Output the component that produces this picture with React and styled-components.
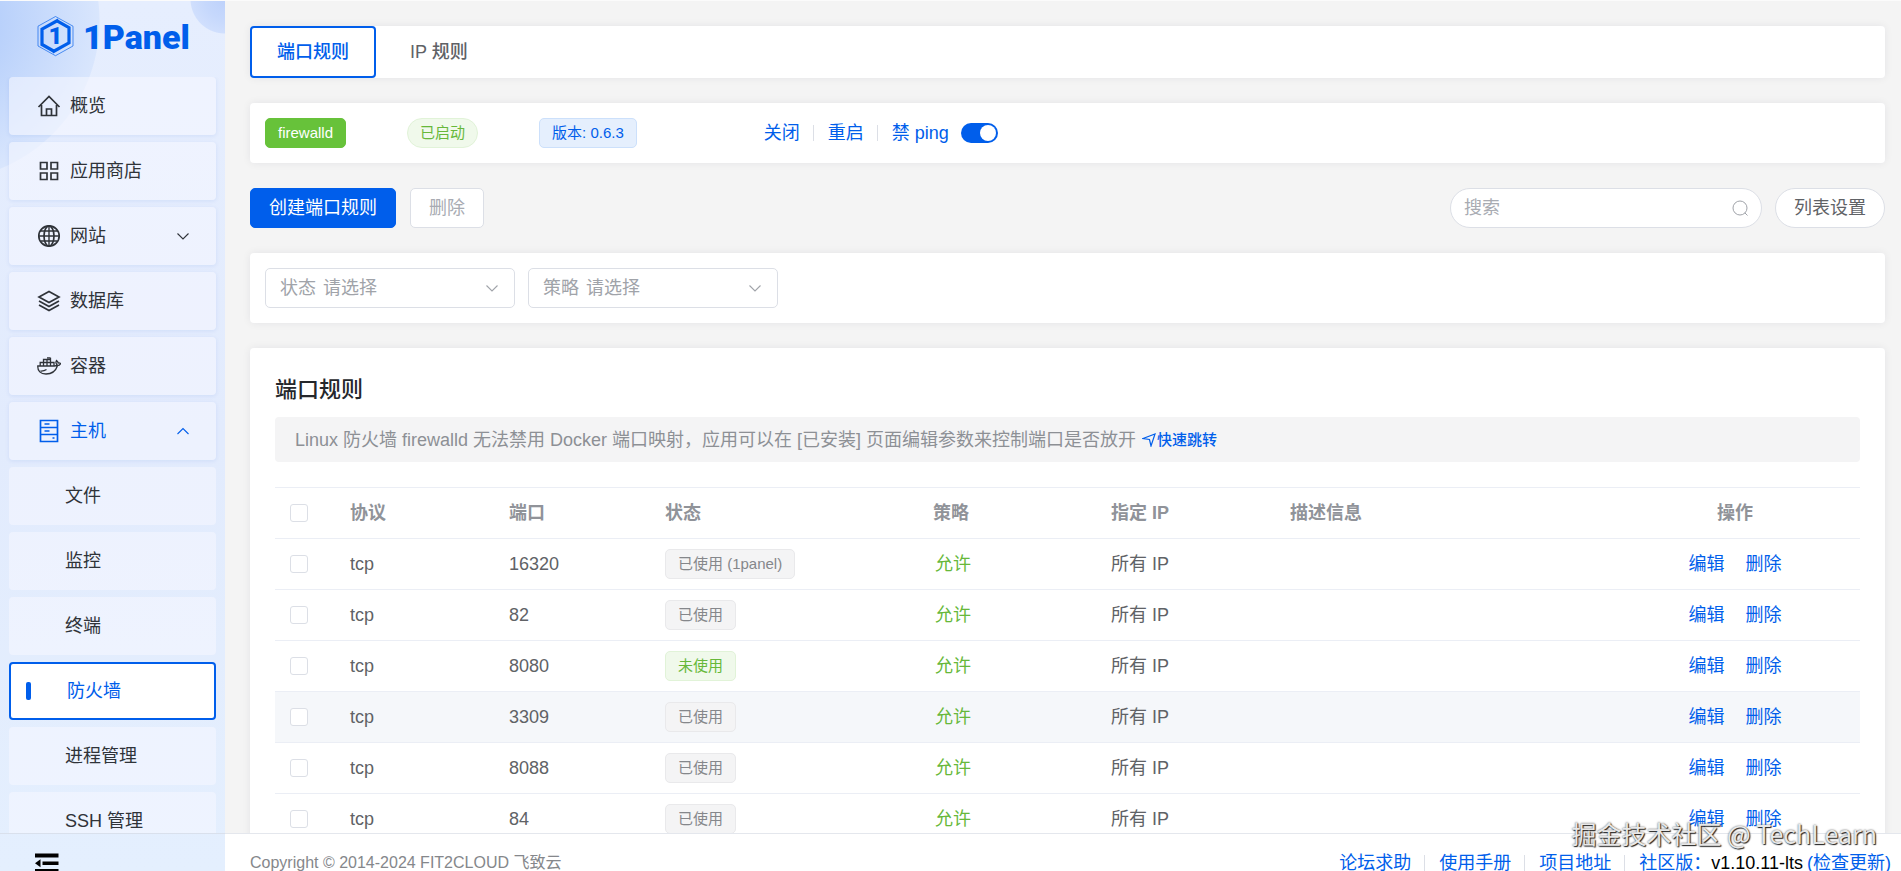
import React from "react";
import styled, { createGlobalStyle, css } from "styled-components";

const blue = "#005eeb";

const GlobalStyle = createGlobalStyle`
  *, *::before, *::after { box-sizing: border-box; }
  html, body, #root { margin: 0; height: 100%; }
  body {
    font-family: "Liberation Sans", "Noto Sans CJK SC", sans-serif;
    font-size: 18px;
    line-height: 24px;
    color: #606266;
    background: #f4f4f4;
    overflow: hidden;
  }
  button, input, select { font: inherit; color: inherit; margin: 0; }
  a { color: ${blue}; text-decoration: none; }
`;

const Shell = styled.div`
  display: flex;
  height: 100vh;
  border-top: 1px solid #fbfbfb;
`;

/* ---------- sidebar ---------- */
const Sidebar = styled.aside`
  flex: none;
  width: 225px;
  display: flex;
  flex-direction: column;
  background:
    radial-gradient(circle at 225px -2px, #bdd1fb 0, #c6d8fc 20px, #d0dffd 34px, transparent 35px),
    radial-gradient(circle at -60px 20px, #b4cefb 0, #b9d1fb 60px, #d9e6fd 159px, transparent 160px),
    linear-gradient(180deg, #e6eefe 0, #e2ebfd 50%, #e4effe 100%);
`;

const Brand = styled.a`
  flex: none;
  height: 76px;
  display: flex;
  align-items: flex-start;
  padding: 14px 0 0 37px;
  gap: 9px;
`;

const BrandName = styled.span`
  font-family: Roboto, sans-serif;
  font-weight: 900;
  font-size: 34px;
  line-height: 44px;
`;

const Menu = styled.nav`
  flex: 1;
  min-height: 0;
  overflow: hidden;
  display: flex;
  flex-direction: column;
  gap: 7px;
  padding: 0 9px;
`;

const MenuItem = styled.a`
  flex: none;
  height: 58px;
  display: flex;
  align-items: center;
  gap: 9px;
  padding: 0 26px 0 28px;
  border-radius: 4px;
  color: ${(p) => (p.$open ? blue : "#2f3339")};
  background: rgba(245, 246, 255, 0.6);
  box-shadow: 0 1px 4px rgba(0, 80, 200, 0.09);
  svg:last-child { margin-left: auto; }
  svg:first-child { margin-left: 0; }
`;

const SubItem = styled(MenuItem)`
  padding-left: 56px;
  box-shadow: none;
  ${(p) => p.$active && css`
    padding-left: 15px;
    gap: 36px;
    color: ${blue};
    background: #fff;
    border: 2px solid ${blue};
    &::before {
      content: "";
      width: 5px;
      height: 18px;
      border-radius: 2px;
      background: ${blue};
    }
  `}
`;

const SideFoot = styled.div`
  flex: none;
  height: 38px;
  border-top: 1px solid #d9e0ec;
  padding: 19px 0 0 33px;
  overflow: hidden;
`;

const IconButton = styled.button`
  border: 0;
  padding: 0;
  background: none;
  display: block;
  color: #000;
`;

/* ---------- main ---------- */
const Main = styled.div`
  flex: 1;
  min-width: 0;
  display: flex;
  flex-direction: column;
`;

const Content = styled.main`
  flex: 1;
  min-height: 0;
  overflow: hidden;
  display: flex;
  flex-direction: column;
  gap: 25px;
  padding: 25px 16px 0 25px;
`;

const Card = styled.section`
  flex: none;
  background: #fff;
  border-radius: 4px;
  box-shadow: 0 0 8px rgba(0, 20, 60, 0.07);
`;

const Tabs = styled(Card)`
  display: flex;
  gap: 7px;
  height: 52px;
`;

const Tab = styled.button`
  height: 52px;
  padding: 0 25px;
  font-weight: 500;
  border-radius: 4px;
  background: #fff;
  border: 2px solid ${(p) => (p.$active ? blue : "transparent")};
  color: ${(p) => (p.$active ? blue : "#606266")};
`;

const StatusCard = styled(Card)`
  display: flex;
  align-items: center;
  height: 60px;
  padding: 0 15px;
`;

const tones = {
  solid: ["#67c23a", "#67c23a", "#fff"],
  green: ["#f0f9eb", "#e1f3d8", "#67b83a"],
  blue: ["#e5effd", "#cce0fb", blue],
  gray: ["#f4f4f5", "#e9e9eb", "#85878b"],
};

const Tag = styled.span`
  display: inline-flex;
  align-items: center;
  height: 30px;
  padding: 0 12px;
  font-size: 15px;
  border-radius: ${(p) => (p.$round ? 15 : 5)}px;
  background: ${(p) => tones[p.$tone][0]};
  border: 1px solid ${(p) => tones[p.$tone][1]};
  color: ${(p) => tones[p.$tone][2]};
`;

const StatusTags = styled.div`
  display: flex;
  gap: 61px;
  margin-right: 127px;
`;

const Actions = styled.div`
  display: flex;
  align-items: center;
`;

const LinkButton = styled.button`
  border: 0;
  padding: 0;
  background: none;
  white-space: nowrap;
  color: ${(p) => p.$color || blue};
`;

const Divider = styled.span`
  width: 1px;
  height: 16px;
  margin: 0 14px 0 13px;
  background: #dcdfe6;
`;

const SwitchLabel = styled.label`
  display: flex;
  align-items: center;
  gap: 12px;
  color: ${blue};
`;

const Switch = styled.input`
  appearance: none;
  width: 37px;
  height: 20px;
  border-radius: 10px;
  background: ${blue};
  display: flex;
  justify-content: flex-end;
  padding: 2px;
  &::before {
    content: "";
    width: 16px;
    height: 16px;
    border-radius: 50%;
    background: #fff;
  }
`;

const Toolbar = styled.div`
  flex: none;
  display: flex;
  align-items: center;
  height: 40px;
`;

const Button = styled.button`
  height: 40px;
  padding: 0 18px;
  white-space: nowrap;
  border-radius: ${(p) => (p.$round ? 20 : 5)}px;
  border: 1px solid ${(p) => (p.$primary ? blue : "#dcdfe6")};
  background: ${(p) => (p.$primary ? blue : "#fff")};
  color: ${(p) => (p.$primary ? "#fff" : p.disabled ? "#a8abb2" : "#606266")};
  & + & { margin-left: 14px; }
`;

const Search = styled.label`
  display: flex;
  align-items: center;
  width: 312px;
  height: 40px;
  margin: 0 13px 0 auto;
  padding: 0 12px 0 13px;
  border: 1px solid #dcdfe6;
  border-radius: 20px;
  background: #fff;
  color: #a0a3a9;
  input {
    flex: 1;
    min-width: 0;
    height: 24px;
    border: 0;
    outline: 0;
    padding: 0;
    background: none;
  }
  input::placeholder { color: #a8abb2; opacity: 1; }
`;

const Filters = styled(Card)`
  display: flex;
  gap: 13px;
  padding: 15px;
`;

const Field = styled.label`
  display: flex;
  align-items: center;
  gap: 7px;
  width: 250px;
  height: 40px;
  padding: 0 15px 0 14px;
  border: 1px solid #dcdfe6;
  border-radius: 5px;
  color: #a0a3a9;
  select {
    flex: 1;
    min-width: 0;
    height: 24px;
    appearance: none;
    border: 0;
    padding: 0;
    background: none;
  }
`;

const Panel = styled(Card)`
  padding: 25px;
`;

const Title = styled.h2`
  margin: 0;
  padding: 1px 0 11px;
  font-size: 22px;
  line-height: 32px;
  font-weight: 500;
  color: #25272b;
`;

const Notice = styled.p`
  display: flex;
  align-items: center;
  gap: 6px;
  margin: 0 0 25px;
  height: 45px;
  padding: 0 20px;
  border-radius: 4px;
  background: #f4f4f5;
  color: #8d9095;
  a {
    display: flex;
    align-items: center;
    gap: 1px;
    font-size: 15px;
    font-weight: 500;
  }
`;

const Table = styled.table`
  width: 100%;
  table-layout: fixed;
  border-collapse: collapse;
  border-top: 1px solid #ebeef5;
  th, td {
    height: 51px;
    padding: 0 15px;
    text-align: left;
    white-space: nowrap;
    border-bottom: 1px solid #ebeef5;
  }
  th { color: #909399; font-weight: 700; }
  th:last-child { text-align: center; }
`;

const Row = styled.tr`
  background: ${(p) => (p.$hover ? "#f5f7fa" : "#fff")};
`;

const Check = styled.input`
  appearance: none;
  display: block;
  width: 18px;
  height: 18px;
  border: 1px solid #dcdfe6;
  border-radius: 3px;
  background: #fff;
`;

const RowActions = styled.div`
  display: flex;
  justify-content: center;
  gap: 21px;
`;

const Allow = styled(LinkButton)`
  padding-left: 2px;
`;

const Footer = styled.footer`
  flex: none;
  display: flex;
  justify-content: space-between;
  height: 38px;
  padding: 0 10px 0 25px;
  border-top: 1px solid #e4e7ed;
  background: #fff;
  overflow: hidden;
`;

const Copyright = styled.span`
  font-size: 16px;
  line-height: 58px;
  color: #85878b;
`;

const FooterLinks = styled(Actions)`
  height: 58px;
  white-space: nowrap;
`;

const Version = styled.span`
  margin-right: 4px;
  color: #000;
`;

const Watermark = styled.div`
  position: absolute;
  right: 24px;
  bottom: 20px;
  font-size: 25px;
  line-height: 36px;
  font-family: "Noto Sans CJK SC", sans-serif;
  color: #e8e8e8;
  text-shadow: 1px 1px 1px #222, 0 0 2px #555;
  pointer-events: none;
`;

/* ---------- drawings ---------- */
const Svg = ({ size = 24, children, ...rest }) => (
  <svg width={size} height={size} viewBox="0 0 24 24" fill="none" stroke="currentColor" strokeWidth="1.7" aria-hidden="true" {...rest}>
    {children}
  </svg>
);

const LogoMark = () => (
  <svg width="37" height="42" viewBox="0 0 37 42" fill="none" stroke={blue} aria-hidden="true">
    <path d="M18.5 1.5L36 11.2V31L18.5 40.7L1 31V11.2Z" strokeWidth="1" opacity="0.65" />
    <path d="M15.5 37L32 27.8V12.7L20.5 6.2" strokeWidth="3.2" />
    <path d="M21.5 5L5 14.2V29.5L16.5 36" strokeWidth="3.2" />
    <text x="18.5" y="29" textAnchor="middle" fontFamily="Roboto, sans-serif" fontWeight="900" fontSize="24" fill={blue} stroke="none">1</text>
  </svg>
);

const icons = {
  home: <Svg><path d="M1.5 13L12 2.5L22.5 13M4.5 11V21.5H19.5V11M9.5 21.5V15H14.5V21.5" /></Svg>,
  store: <Svg><path d="M3.5 3.5H10V10H3.5ZM14 3.5H20.5V10H14ZM3.5 14H10V20.5H3.5ZM14 14H20.5V20.5H14Z" /></Svg>,
  globe: <Svg><circle cx="12" cy="12" r="10.2" /><ellipse cx="12" cy="12" rx="5" ry="10.2" /><path d="M12 2V22M2 12H22M3.5 7H20.5M3.5 17H20.5" strokeWidth="1.4" /></Svg>,
  layers: <Svg><path d="M12 2.5L22 8L12 13.5L2 8ZM2 12L12 17.5L22 12M2 16L12 21.5L22 16" /></Svg>,
  docker: (
    <Svg strokeWidth="1.3">
      <path d="M0.8 12H17.5C19 12 19.8 11.5 20 10.5C18.8 9.5 18.7 8 19.5 6.5C20.5 7.2 21 8 21.2 9C22.2 8.8 23 9 23.6 9.5C23 11 21.8 11.7 20.5 11.7C18.5 17.5 14.5 20 9 20C3.5 20 0.5 17 0.8 12Z" />
      <path d="M3.2 12V8.5H17V12M6.5 8.5V12M10 5.5V12M13.5 3.8V12M6.5 8.5V5.5H13.5M10 3.8H13.5M3.5 17C6 17.2 8 16.5 9.5 15.5" />
    </Svg>
  ),
  host: <Svg><path d="M3.5 1.5H20.5V22.5H3.5ZM3.5 8.5H20.5M3.5 15.5H20.5M7.5 5H12.5M7.5 12H12.5M15.5 19H17.5" /></Svg>,
};

const Chevron = ({ up }) => (
  <svg width="14" height="14" viewBox="0 0 14 14" fill="none" stroke="currentColor" strokeWidth="1.1" aria-hidden="true">
    <path d={up ? "M1.5 10L7 4.5L12.5 10" : "M1.5 4.5L7 10L12.5 4.5"} />
  </svg>
);

const menu = [
  { icon: "home", label: "概览" },
  { icon: "store", label: "应用商店" },
  { icon: "globe", label: "网站", expand: true },
  { icon: "layers", label: "数据库" },
  { icon: "docker", label: "容器" },
  { icon: "host", label: "主机", expand: true, open: true },
];
const hostMenu = ["文件", "监控", "终端", "防火墙", "进程管理", "SSH 管理"];

const rules = [
  { port: "16320", state: "已使用 (1panel)" },
  { port: "82", state: "已使用" },
  { port: "8080", state: "未使用", free: true },
  { port: "3309", state: "已使用", hover: true },
  { port: "8088", state: "已使用" },
  { port: "84", state: "已使用" },
];

const SelectField = ({ label }) => (
  <Field>
    <span>{label}</span>
    <select defaultValue="">
      <option value="">请选择</option>
    </select>
    <Chevron />
  </Field>
);

export default function App() {
  return (
    <Shell>
      <GlobalStyle />
      <Sidebar>
        <Brand href="#">
          <LogoMark />
          <BrandName>1Panel</BrandName>
        </Brand>
        <Menu>
          {menu.map((m) => (
            <MenuItem key={m.label} href="#" $open={m.open}>
              {icons[m.icon]}
              <span>{m.label}</span>
              {m.expand && <Chevron up={m.open} />}
            </MenuItem>
          ))}
          {hostMenu.map((label) => (
            <SubItem key={label} href="#" $active={label === "防火墙"}>
              <span>{label}</span>
            </SubItem>
          ))}
        </Menu>
        <SideFoot>
          <IconButton aria-label="收起菜单">
            <svg width="27" height="24" viewBox="0 0 27 24" fill="currentColor" aria-hidden="true">
              <path d="M2 0.5H25.500V4.500H2ZM9.500 8.500H25.500V12H9.500ZM2 16H25.500V20H2ZM2 10.200L7.500 6.200V14.200Z" />
            </svg>
          </IconButton>
        </SideFoot>
      </Sidebar>

      <Main>
        <Content>
          <Tabs as="div">
            <Tab $active>端口规则</Tab>
            <Tab>IP 规则</Tab>
          </Tabs>

          <StatusCard>
            <StatusTags>
              <Tag $tone="solid">firewalld</Tag>
              <Tag $tone="green" $round>已启动</Tag>
              <Tag $tone="blue">版本: 0.6.3</Tag>
            </StatusTags>
            <Actions>
              <LinkButton>关闭</LinkButton>
              <Divider />
              <LinkButton>重启</LinkButton>
              <Divider />
              <SwitchLabel>
                禁 ping
                <Switch type="checkbox" role="switch" defaultChecked />
              </SwitchLabel>
            </Actions>
          </StatusCard>

          <Toolbar>
            <Button $primary>创建端口规则</Button>
            <Button disabled>删除</Button>
            <Search>
              <input type="text" placeholder="搜索" aria-label="搜索" />
              <svg width="18" height="18" viewBox="0 0 18 18" fill="none" stroke="currentColor" aria-hidden="true">
                <circle cx="9" cy="9" r="7" />
                <path d="M13.8 13.8L16.500 16.500" />
              </svg>
            </Search>
            <Button $round>列表设置</Button>
          </Toolbar>

          <Filters>
            <SelectField label="状态" />
            <SelectField label="策略" />
          </Filters>

          <Panel>
            <Title>端口规则</Title>
            <Notice>
              <span>Linux 防火墙 firewalld 无法禁用 Docker 端口映射，应用可以在 [已安装] 页面编辑参数来控制端口是否放开</span>
              <a href="#">
                <svg width="14" height="14" viewBox="0 0 14 14" fill="none" stroke="currentColor" strokeWidth="1.2" aria-hidden="true">
                  <path d="M1 5.5L13 1L9 13L7.5 6.5Z" />
                </svg>
                快速跳转
              </a>
            </Notice>
            <Table>
              <colgroup>
                <col width="60" />
                <col width="159" />
                <col width="156" />
                <col width="268" />
                <col width="178" />
                <col width="179" />
                <col />
                <col width="250" />
              </colgroup>
              <thead>
                <tr>
                  <th><Check type="checkbox" aria-label="全选" /></th>
                  <th>协议</th>
                  <th>端口</th>
                  <th>状态</th>
                  <th>策略</th>
                  <th>指定 IP</th>
                  <th>描述信息</th>
                  <th>操作</th>
                </tr>
              </thead>
              <tbody>
                {rules.map((r) => (
                  <Row key={r.port} $hover={r.hover}>
                    <td><Check type="checkbox" aria-label={r.port} /></td>
                    <td>tcp</td>
                    <td>{r.port}</td>
                    <td><Tag $tone={r.free ? "green" : "gray"}>{r.state}</Tag></td>
                    <td><Allow $color="#67b83a">允许</Allow></td>
                    <td>所有 IP</td>
                    <td />
                    <td>
                      <RowActions>
                        <LinkButton>编辑</LinkButton>
                        <LinkButton>删除</LinkButton>
                      </RowActions>
                    </td>
                  </Row>
                ))}
              </tbody>
            </Table>
          </Panel>
        </Content>

        <Footer>
          <Copyright>Copyright © 2014-2024 FIT2CLOUD 飞致云</Copyright>
          <FooterLinks>
            <a href="#">论坛求助</a>
            <Divider />
            <a href="#">使用手册</a>
            <Divider />
            <a href="#">项目地址</a>
            <Divider />
            <a href="#">社区版：</a>
            <Version>v1.10.11-lts</Version>
            <a href="#">(检查更新)</a>
          </FooterLinks>
        </Footer>
      </Main>
      <Watermark>掘金技术社区 @ TechLearn</Watermark>
    </Shell>
  );
}
